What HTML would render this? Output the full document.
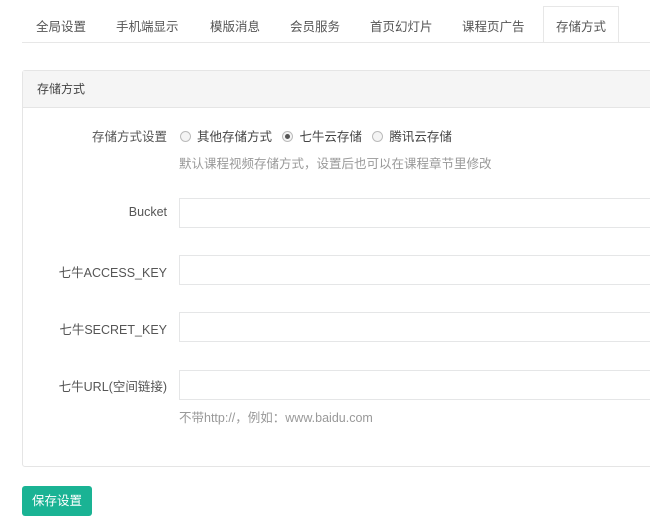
<!DOCTYPE html>
<html><head><meta charset="utf-8"><style>
body{margin:0;width:650px;height:532px;background:#fff;font-family:"Liberation Sans","Noto Sans CJK SC",sans-serif;font-size:12px;color:#555;position:relative;overflow:hidden}
.tabs{position:absolute;left:22px;top:42px;width:700px;border-top:1px solid #e7e7e7}
.tab{position:absolute;top:16px;font-size:12.5px;color:#555}
.act{position:absolute;left:543px;top:6px;width:76px;height:37px;border:1px solid #e7e7e7;border-bottom:none;background:#fff;box-sizing:border-box}
.panel{position:absolute;left:22px;top:70px;width:700px;height:397px;border:1px solid #e5e5e5;border-radius:3px;box-sizing:border-box}
.hd{height:36px;background:#f5f5f5;border-bottom:1px solid #e5e5e5;line-height:36px;padding-left:14px;color:#444}
.lbl{position:absolute;right:483px;font-size:12.5px;color:#555;white-space:nowrap}
.in{position:absolute;left:179px;width:500px;height:30px;border:1px solid #e5e6e7;box-sizing:border-box}
.hint{position:absolute;left:179px;color:#999;font-size:12.5px}
.r{display:inline-block;width:9px;height:9px;border:1px solid #bbb;border-radius:50%;vertical-align:-1px;margin-right:6px;position:relative;background:#f4f4f4}
.r.on::after{content:"";position:absolute;left:2px;top:2px;width:5px;height:5px;border-radius:50%;background:#555}
.btn{position:absolute;left:22px;top:486px;width:70px;height:30px;background:#1ab394;border-radius:3px;color:#fff;line-height:30px;text-align:center;font-size:12.5px}
</style></head><body>
<div class="act"></div>
<div class="tabs"></div>
<span class="tab" style="left:36px">全局设置</span>
<span class="tab" style="left:116px">手机端显示</span>
<span class="tab" style="left:210px">模版消息</span>
<span class="tab" style="left:290px">会员服务</span>
<span class="tab" style="left:370px">首页幻灯片</span>
<span class="tab" style="left:462px">课程页广告</span>
<span class="tab" style="left:556px">存储方式</span>
<div class="panel"><div class="hd">存储方式</div></div>
<span class="lbl" style="top:126px">存储方式设置</span>
<span style="position:absolute;left:180px;top:126px;font-size:12.5px;color:#444;white-space:nowrap"><span class="r"></span>其他存储方式&nbsp;&nbsp;&nbsp;<span class="r on"></span>七牛云存储&nbsp;&nbsp;&nbsp;<span class="r"></span>腾讯云存储</span>
<span class="hint" style="top:153px">默认课程视频存储方式，设置后也可以在课程章节里修改</span>
<span class="lbl" style="top:205px">Bucket</span><div class="in" style="top:198px"></div>
<span class="lbl" style="top:262px">七牛ACCESS_KEY</span><div class="in" style="top:255px"></div>
<span class="lbl" style="top:319px">七牛SECRET_KEY</span><div class="in" style="top:312px"></div>
<span class="lbl" style="top:376px">七牛URL(空间链接)</span><div class="in" style="top:370px"></div>
<span class="hint" style="top:407px">不带http://，例如：www.baidu.com</span>
<div class="btn">保存设置</div>
</body></html>
